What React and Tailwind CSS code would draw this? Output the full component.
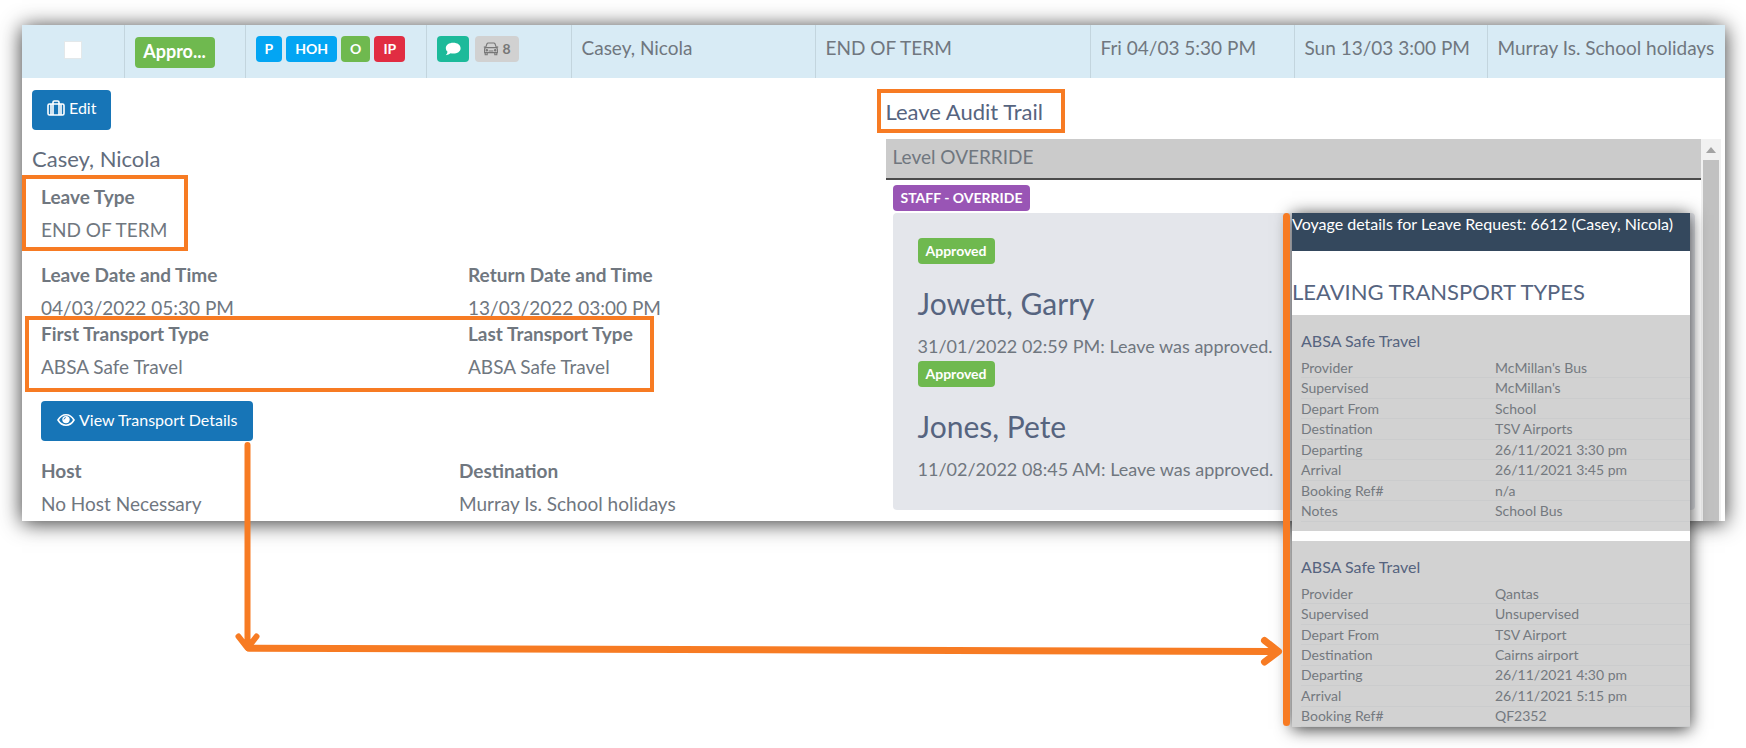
import React from "react";

const rowsA = [
  ["Provider", "McMillan's Bus"],
  ["Supervised", "McMillan's"],
  ["Depart From", "School"],
  ["Destination", "TSV Airports"],
  ["Departing", "26/11/2021 3:30 pm"],
  ["Arrival", "26/11/2021 3:45 pm"],
  ["Booking Ref#", "n/a"],
  ["Notes", "School Bus"],
];

const rowsB = [
  ["Provider", "Qantas"],
  ["Supervised", "Unsupervised"],
  ["Depart From", "TSV Airport"],
  ["Destination", "Cairns airport"],
  ["Departing", "26/11/2021 4:30 pm"],
  ["Arrival", "26/11/2021 5:15 pm"],
  ["Booking Ref#", "QF2352"],
];

function Highlight({ className }) {
  return (
    <span
      aria-hidden="true"
      className={"pointer-events-none absolute border-4 border-[#f77b23] " + className}
    />
  );
}

function Field({ label, children }) {
  return (
    <div>
      <dt className="font-bold leading-6">{label}</dt>
      <dd className="mt-[9px] leading-6">{children}</dd>
    </div>
  );
}

function Tag({ className, children }) {
  return (
    <span
      className={
        "flex h-[26px] w-fit items-center justify-center rounded-sm text-sm font-bold " +
        className
      }
    >
      {children}
    </span>
  );
}

function SuitcaseIcon() {
  return (
    <svg viewBox="0 0 18 16" className="h-4 w-[18px]" fill="none" stroke="currentColor" strokeWidth="1.6">
      <rect x="1" y="4" width="16" height="11" rx="1.5" />
      <path d="M6 15V2.2Q6 1 7.2 1h3.6Q12 1 12 2.2V15M4 4v11M14 4v11" />
    </svg>
  );
}

function EyeIcon() {
  return (
    <svg viewBox="0 0 18 14" className="h-[14px] w-[18px]" fill="none" stroke="currentColor" strokeWidth="1.6">
      <path d="M1 7Q4 1.8 9 1.8T17 7Q14 12.2 9 12.2T1 7z" />
      <circle cx="9" cy="6.6" r="3.7" fill="currentColor" stroke="none" />
      <path d="M7 6.4Q7.2 4.8 8.8 4.6" stroke="#1775b7" strokeWidth="1" />
    </svg>
  );
}

function ChatIcon() {
  return (
    <svg viewBox="0 0 16 14" className="h-[14px] w-4" fill="currentColor">
      <path d="M8.2 0.8C12.4 0.8 15.6 3 15.6 6.2S12.4 11.6 8.2 11.6Q6.8 11.6 5.6 11.3Q3.6 13 0.8 13.2Q2.4 11.6 2.5 9.8Q0.8 8.2 0.8 6.2C0.8 3 4 0.8 8.2 0.8z" />
    </svg>
  );
}

function CarIcon() {
  return (
    <svg viewBox="0 0 16 14" className="h-[14px] w-4" fill="none" stroke="currentColor" strokeWidth="1.1">
      <path d="M2.6 5.6L4 1.8Q4.3 1 5.2 1h5.6q.9 0 1.2.8l1.4 3.8M0.8 4.8l1.8.8h10.8l1.8-.8M1.6 10.6V7.2q0-1.6 1.6-1.6h9.6q1.6 0 1.6 1.6v3.4zM2.2 10.6v2.2h2v-2.2M11.8 10.6v2.2h2v-2.2M5.6 9h4.8" />
      <circle cx="3.8" cy="8.2" r=".7" />
      <circle cx="12.2" cy="8.2" r=".7" />
    </svg>
  );
}

function Voyage({ title, rows, rowsHeight, last }) {
  return (
    <section className={"bg-[#d2d2d2] pt-[14px] pl-[9px] " + (last ? "" : "mb-[10px] pb-[9px]")}>
      <h4 className="text-base leading-6 text-[#56647f]">{title}</h4>
      <table className={"mt-[5px] w-full table-fixed border-collapse text-left text-sm leading-[18px] text-[#74797f] " + rowsHeight}>
        <tbody>
          {rows.map(([k, v]) => (
            <tr key={k} className="border-b border-[#cbcccd]">
              <th scope="row" className="w-[194px] p-0 font-normal">{k}</th>
              <td className="p-0">{v}</td>
            </tr>
          ))}
        </tbody>
      </table>
    </section>
  );
}

function Approval({ name, text }) {
  return (
    <article>
      <Tag className="bg-[#6fb94f] px-2 text-white">Approved</Tag>
      <h3 className="mt-[21px] text-[30px] leading-9 text-[#56647f]">{name}</h3>
      <p className="mt-[13px] text-lg leading-6">{text}</p>
    </article>
  );
}

const lastCell = "px-[10px] pt-[11px] align-top leading-6 whitespace-nowrap";
const cell = "border-r border-[#c3d5de] " + lastCell;

export default function App() {
  return (
    <main className="relative min-h-[748px] overflow-hidden bg-white pt-[25px] pr-[21px] pl-[22px] font-['Lato',sans-serif] text-[19px] text-[#70777f]">
      <div className="bg-white shadow-[0_2px_20px_rgba(0,0,0,0.8)]">
        <table className="w-full table-fixed border-collapse bg-[#d8ebf5]">
          <colgroup>
            <col className="w-[102px]" />
            <col className="w-[121px]" />
            <col className="w-[181px]" />
            <col className="w-[145px]" />
            <col className="w-[244px]" />
            <col className="w-[275px]" />
            <col className="w-[204px]" />
            <col className="w-[193px]" />
            <col />
          </colgroup>
          <tbody>
            <tr className="h-[53px]">
              <td className={cell}>
                <input
                  type="checkbox"
                  aria-label="Select leave request"
                  className="mx-auto mt-[5px] block size-[18px] appearance-none border border-[#e3e8ea] bg-white"
                />
              </td>
              <td className={cell}>
                <span className="mt-px flex h-[31px] w-20 items-center justify-center rounded-sm bg-[#6fb94f] pb-1 text-lg font-bold text-white">
                  Appro...
                </span>
              </td>
              <td className={cell}>
                <div className="flex gap-1">
                  <Tag className="bg-[#03a5f3] px-[9px] text-white">P</Tag>
                  <Tag className="bg-[#03a5f3] px-[9px] text-white">HOH</Tag>
                  <Tag className="bg-[#6fb94f] px-[9px] text-white">O</Tag>
                  <Tag className="bg-[#e12d42] px-[9px] text-white">IP</Tag>
                </div>
              </td>
              <td className={cell}>
                <div className="flex gap-[6px]">
                  <Tag className="bg-[#1dba9a] px-2 text-white">
                    <ChatIcon />
                  </Tag>
                  <Tag className="gap-1 bg-[#d1d1d1] px-2 text-[#777777]">
                    <CarIcon />8
                  </Tag>
                </div>
              </td>
              <td className={cell}>Casey, Nicola</td>
              <td className={cell}>END OF TERM</td>
              <td className={cell}>Fri 04/03 5:30 PM</td>
              <td className={cell}>Sun 13/03 3:00 PM</td>
              <td className={lastCell}>Murray Is. School holidays</td>
            </tr>
          </tbody>
        </table>

        <div className="flex">
          <section className="w-1/2 pt-3 pb-[5px] pl-[10px]">
            <button
              type="button"
              className="flex h-10 items-center gap-1 rounded-sm bg-[#1775b7] px-[15px] pb-1 text-base text-white"
            >
              <SuitcaseIcon />
              Edit
            </button>
            <h2 className="mt-[15px] text-[22px] leading-7 text-[#626c7c]">Casey, Nicola</h2>
            <div className="pl-[9px]">
              <dl className="relative mt-3 w-fit">
                <Highlight className="-top-[10px] -right-[21px] -bottom-[9px] -left-[19px]" />
                <Field label="Leave Type">END OF TERM</Field>
              </dl>
              <dl className="mt-[21px] grid grid-cols-[427px_1fr]">
                <Field label="Leave Date and Time">04/03/2022 05:30 PM</Field>
                <Field label="Return Date and Time">13/03/2022 03:00 PM</Field>
              </dl>
              <dl className="relative mt-[2px] grid w-fit grid-cols-[427px_1fr]">
                <Highlight className="-top-[6px] -right-[21px] -bottom-[13px] -left-4" />
                <Field label="First Transport Type">ABSA Safe Travel</Field>
                <Field label="Last Transport Type">ABSA Safe Travel</Field>
              </dl>
              <button
                type="button"
                className="mt-[22px] flex h-10 items-center gap-1 rounded-sm bg-[#1775b7] px-4 pb-[2px] text-base text-white"
              >
                <EyeIcon />
                View Transport Details
              </button>
              <dl className="mt-[18px] grid grid-cols-[418px_1fr]">
                <Field label="Host">No Host Necessary</Field>
                <Field label="Destination">Murray Is. School holidays</Field>
              </dl>
            </div>
          </section>

          <section className="flex w-1/2 flex-col pl-3 pt-5">
            <h2 className="relative w-fit text-[22px] leading-7 text-[#56647f]">
              <Highlight className="-top-[9px] -right-[22px] -bottom-[7px] -left-[9px]" />
              Leave Audit Trail
            </h2>
            <div className="mt-[13px] flex grow">
              <div className="grow">
                <h3 className="h-[41px] border-b-2 border-[#4b4b4b] bg-[#cbcbcb] pt-[6px] pl-[7px] leading-6">Level OVERRIDE</h3>
                <div className="pt-[5px] pr-[6px] pl-[7px]">
                  <Tag className="bg-[#9955b5] px-2 text-white">STAFF - OVERRIDE</Tag>
                  <div className="mt-[2px] flex flex-col gap-[3px] rounded-sm bg-[#e4e6eb] px-[25px] pt-[25px] pb-[29px]">
                    <Approval name="Jowett, Garry" text="31/01/2022 02:59 PM: Leave was approved." />
                    <Approval name="Jones, Pete" text="11/02/2022 08:45 AM: Leave was approved." />
                  </div>
                </div>
              </div>
              <div className="mr-1 flex w-5 flex-col items-center bg-[#f1f1f1] px-[2px]">
                <svg viewBox="0 0 10 6" className="mt-2 mb-[7px] h-[6px] w-[10px]" fill="#a3a3a3">
                  <path d="M0 6L5 0l5 6z" />
                </svg>
                <div className="w-full grow bg-[#c1c1c1]" />
              </div>
            </div>
          </section>
        </div>
      </div>

      <aside className="absolute top-[213px] left-[1292px] w-[398px] bg-white shadow-[0_2px_16px_rgba(0,0,0,0.8)]">
        <h2 className="h-[38px] bg-[#34485d] text-base leading-[22px] text-white">
          Voyage details for Leave Request: 6612 (Casey, Nicola)
        </h2>
        <h3 className="pt-[27px] pb-[9px] text-[22px] leading-7 text-[#56647f]">LEAVING TRANSPORT TYPES</h3>
        <Voyage title="ABSA Safe Travel" rows={rowsA} rowsHeight="h-[164px]" />
        <Voyage title="ABSA Safe Travel" rows={rowsB} rowsHeight="h-[143px]" last />
      </aside>

      <svg
        aria-hidden="true"
        className="pointer-events-none absolute top-0 left-0 h-[748px] w-[1746px]"
        fill="none"
        stroke="#f77b23"
        strokeLinecap="round"
        strokeLinejoin="round"
      >
        <path d="M247.5 445V647M238.500 636.500L247.500 648L256.500 636.500" strokeWidth="6" />
        <path d="M249 648.200L1278 651.500M1264.500 640.500L1278.500 651.500L1264.500 662" strokeWidth="7" />
        <path d="M1286.500 216.500V722.500" strokeWidth="7" />
      </svg>
    </main>
  );
}
